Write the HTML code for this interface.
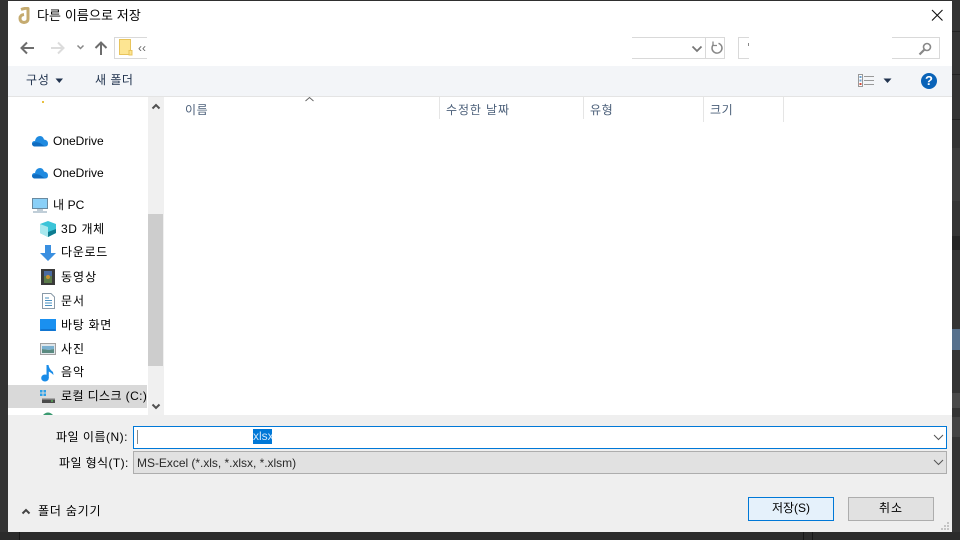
<!DOCTYPE html>
<html lang="ko"><head><meta charset="utf-8"><title>다른 이름으로 저장</title>
<style>
*{box-sizing:border-box}
html,body{margin:0;padding:0;width:960px;height:540px;overflow:hidden;background:#2f2f2f}
body{position:relative;font-family:"Liberation Sans","Noto Sans CJK KR",sans-serif;font-size:12px;color:#000}
div,span,svg{position:absolute}
.t{white-space:nowrap;line-height:16px;height:16px}
.g{color:#4c607a}
.d{color:#22344f}
.line{background:#e5e5e5}
</style></head>
<body>
<div style="left:0;top:0;width:8px;height:540px;background:#333"></div>
<div style="left:952px;top:0;width:8px;height:540px;background:#343434"></div>
<div style="left:952px;top:31px;width:8px;height:1px;background:#222"></div>
<div style="left:952px;top:74px;width:8px;height:1px;background:#222"></div>
<div style="left:952px;top:119px;width:8px;height:1px;background:#222"></div>
<div style="left:952px;top:148px;width:8px;height:53px;background:#3c3c3c"></div>
<div style="left:952px;top:236px;width:8px;height:14px;background:#252525"></div>
<div style="left:952px;top:329px;width:8px;height:21px;background:#56708c"></div>
<div style="left:952px;top:393px;width:8px;height:15px;background:#4a4a4a"></div>
<div style="left:952px;top:417px;width:8px;height:20px;background:#444"></div>
<div style="left:0;top:532px;width:960px;height:8px;background:#2b2b2b"></div>
<div style="left:19px;top:532px;width:1px;height:8px;background:#161616"></div>
<div style="left:803px;top:532px;width:1px;height:8px;background:#161616"></div>
<div style="left:812px;top:532px;width:1px;height:8px;background:#161616"></div>

<div style="left:8px;top:1px;width:944px;height:531px;background:#fff"></div>

<!-- title -->
<svg style="left:18px;top:7px" width="14" height="17" viewBox="0 0 14 17"><path d="M3 2.500Q9 .5 10 1.500V12Q10 15 6 15.500Q2 15 2 11.500Q2 8 6 7.500" fill="none" stroke="#c5ab70" stroke-width="3"/></svg>
<div class="t" style="left:37px;top:8px;font-size:13px;letter-spacing:.1px">다른 이름으로 저장</div>
<svg style="left:930px;top:8px" width="14" height="14" viewBox="0 0 14 14"><path d="M2 2L12.500 12.500M12.500 2L2 12.500" stroke="#111" stroke-width="1.100" fill="none"/></svg>

<!-- nav -->
<svg style="left:20px;top:41px" width="15" height="14" viewBox="0 0 15 14"><path d="M14 7H2M7 1.500L1.500 7L7 12.500" fill="none" stroke="#6d6d6d" stroke-width="2"/></svg>
<svg style="left:50px;top:41px" width="15" height="14" viewBox="0 0 15 14"><path d="M1 7H13M8 1.500L13.500 7L8 12.500" fill="none" stroke="#dcdcdc" stroke-width="2"/></svg>
<svg style="left:76px;top:44px" width="9" height="7" viewBox="0 0 9 7"><path d="M1.500 1.500L4.500 4.500L7.500 1.500" fill="none" stroke="#888" stroke-width="1.500"/></svg>
<svg style="left:94px;top:41px" width="14" height="14" viewBox="0 0 14 14"><path d="M7 14V2M1.500 7L7 1.500L12.500 7" fill="none" stroke="#6d6d6d" stroke-width="2"/></svg>

<!-- address -->
<div style="left:114px;top:37px;width:611px;height:22px;border:1px solid #d9d9d9;background:#fff"></div>
<div style="left:705px;top:37px;width:1px;height:22px;background:#d9d9d9"></div>
<svg style="left:119px;top:39px" width="14" height="17" viewBox="0 0 14 17"><path d="M.5.500H11.500V15.500H.5Z" fill="#fde592" stroke="#e8c45c"/><path d="M10 11.500H13V16H10Z" fill="#fde592" stroke="#e8c45c"/></svg>
<div class="t" style="left:138px;top:40px;font-size:12px;color:#666">‹‹</div>
<div style="left:147px;top:36px;width:485px;height:24px;background:#fff"></div>
<svg style="left:691px;top:45px" width="12" height="8" viewBox="0 0 12 8"><path d="M1.500 1.500L6 6L10.500 1.500" fill="none" stroke="#777" stroke-width="1.800"/></svg>
<svg style="left:710px;top:41px" width="14" height="14" viewBox="0 0 14 14"><path d="M3.500 3.500A5 5 0 1 0 8.500 2.300" fill="none" stroke="#888" stroke-width="1.500"/><path d="M3 .5V4.500H7" fill="none" stroke="#888" stroke-width="1.300"/></svg>

<!-- search -->
<div style="left:738px;top:37px;width:202px;height:22px;border:1px solid #d9d9d9;background:#fff"></div>
<div style="left:749px;top:36px;width:143px;height:24px;background:#fff"></div>
<div style="left:748px;top:43px;width:1px;height:3px;background:#888"></div>
<svg style="left:918px;top:42px" width="14" height="14" viewBox="0 0 14 14"><circle cx="9" cy="5" r="3.500" fill="none" stroke="#888" stroke-width="1.600"/><path d="M6.500 7.500L1.500 12.500" stroke="#888" stroke-width="2.200"/></svg>

<!-- toolbar -->
<div style="left:8px;top:66px;width:944px;height:31px;background:#f3f5f8;border-bottom:1px solid #e4e4e4"></div>
<div class="t d" style="left:26px;top:72px;letter-spacing:.8px">구성</div>
<svg style="left:55px;top:78px" width="9" height="6" viewBox="0 0 9 6"><path d="M.5.500H8L4.300 5Z" fill="#22344f"/></svg>
<div class="t d" style="left:95px;top:72px;letter-spacing:.5px">새 폴더</div>
<svg style="left:858px;top:74px" width="17" height="13" viewBox="0 0 17 13"><rect x=".5" y=".5" width="4" height="12" fill="#fff" stroke="#999"/><rect x="1.500" y="2" width="2" height="2" fill="#6a9fd0"/><rect x="1.500" y="5.500" width="2" height="2" fill="#6a9fd0"/><rect x="1.500" y="9" width="2" height="2" fill="#d04a3a"/><path d="M6 2.500H16M6 6.500H16M6 10.500H16" stroke="#999"/></svg>
<svg style="left:883px;top:78px" width="9" height="6" viewBox="0 0 9 6"><path d="M.5.500H8.500L4.500 5Z" fill="#22344f"/></svg>
<div style="left:921px;top:73px;width:16px;height:16px;border-radius:50%;background:#0a63b8;color:#fff;font-weight:bold;font-size:13px;line-height:16px;text-align:center">?</div>

<!-- sidebar -->
<div style="left:148px;top:97px;width:16px;height:318px;background:#f0f0f0"></div>
<div style="left:148px;top:214px;width:15px;height:152px;background:#cdcdcd"></div>
<svg style="left:151px;top:103px" width="10" height="7" viewBox="0 0 10 7"><path d="M1.500 5.500L5 2L8.500 5.500" fill="none" stroke="#505050" stroke-width="2"/></svg>
<svg style="left:151px;top:403px" width="10" height="7" viewBox="0 0 10 7"><path d="M1.500 1.500L5 5L8.500 1.500" fill="none" stroke="#505050" stroke-width="2"/></svg>
<div style="left:42px;top:101px;width:2px;height:2px;background:#e8c040"></div>

<svg style="left:32px;top:135px" width="16" height="12" viewBox="0 0 16 12"><path d="M2.500 11.500Q0 11 0 8.500Q0 6 3 6Q4 1 8 1Q11 1 12 4.500Q16 5 16 8.500Q16 11.500 13 11.500Z" fill="#1f8ae0"/><path d="M2.500 11.500Q0 11 0 8.500Q3 6 8 8L13 11.500Z" fill="#0f6cc0"/></svg>
<div class="t" style="left:53px;top:133px">OneDrive</div>
<svg style="left:32px;top:167px" width="16" height="12" viewBox="0 0 16 12"><path d="M2.500 11.500Q0 11 0 8.500Q0 6 3 6Q4 1 8 1Q11 1 12 4.500Q16 5 16 8.500Q16 11.500 13 11.500Z" fill="#1f8ae0"/><path d="M2.500 11.500Q0 11 0 8.500Q3 6 8 8L13 11.500Z" fill="#0f6cc0"/></svg>
<div class="t" style="left:53px;top:165px">OneDrive</div>

<svg style="left:32px;top:198px" width="17" height="15" viewBox="0 0 17 15"><rect x=".5" y=".5" width="15" height="10" fill="#8ad0f8" stroke="#6a8aa0"/><path d="M5 12H11M1 14H15" stroke="#9ab0c0" stroke-width="1.200"/></svg>
<div class="t" style="left:53px;top:197px;letter-spacing:.1px">내 PC</div>

<svg style="left:40px;top:221px" width="16" height="16" viewBox="0 0 16 16"><path d="M8 0L16 3V12L8 16L0 12V3Z" fill="#3cc4d8"/><path d="M0 3L8 6V16L0 12Z" fill="#a8e8ee"/><path d="M8 11L16 8V12L8 16Z" fill="#0e7c90"/></svg>
<div class="t" style="left:61px;top:221px;letter-spacing:.6px">3D 개체</div>

<svg style="left:40px;top:245px" width="16" height="16" viewBox="0 0 16 16"><path d="M5 0H11V8H16L8 16L0 8H5Z" fill="#3a8fe0"/></svg>
<div class="t" style="left:61px;top:244px;letter-spacing:.7px">다운로드</div>

<svg style="left:41px;top:269px" width="14" height="16" viewBox="0 0 14 16"><rect width="14" height="16" fill="#3a3a3a"/><rect x="3" y="2" width="8" height="12" fill="#5a7a4a"/><rect x="3" y="2" width="8" height="5" fill="#4a6aa0"/><circle cx="7" cy="8" r="2" fill="#c89030"/></svg>
<div class="t" style="left:61px;top:269px;letter-spacing:1px">동영상</div>

<svg style="left:42px;top:293px" width="13" height="16" viewBox="0 0 13 16"><path d="M.5.500H9L12.500 4V15.500H.5Z" fill="#fff" stroke="#8a9aa8"/><path d="M3 5H7M3 7.500H10M3 10H10M3 12.500H10" stroke="#4a90c0"/></svg>
<div class="t" style="left:61px;top:293px;letter-spacing:1px">문서</div>

<svg style="left:40px;top:319px" width="16" height="12" viewBox="0 0 16 12"><rect width="16" height="12" fill="#1a90f0"/><rect x=".5" y="10.500" width="15" height="1" fill="#0a5ab0"/></svg>
<div class="t" style="left:61px;top:317px;letter-spacing:.7px">바탕 화면</div>

<svg style="left:40px;top:343px" width="16" height="12" viewBox="0 0 16 12"><rect x=".5" y=".5" width="15" height="11" fill="#dfe6ea" stroke="#a0a0a0"/><path d="M2 3H14V6L9 7L2 6Z" fill="#7ab0d0"/><path d="M2 6L9 7L14 6V10H2Z" fill="#5a8a80"/></svg>
<div class="t" style="left:61px;top:341px;letter-spacing:1px">사진</div>

<svg style="left:41px;top:364px" width="14" height="18" viewBox="0 0 14 18"><ellipse cx="4" cy="14" rx="3.800" ry="3.500" fill="#1a8ce8"/><path d="M5.500 14V1H7.500Q8 5 12 8L12.500 11Q10 8.500 7.800 7.500V14Z" fill="#1a8ce8"/></svg>
<div class="t" style="left:61px;top:364px;letter-spacing:1px">음악</div>

<div style="left:8px;top:385px;width:139px;height:23px;background:#d9d9d9"></div>
<svg style="left:40px;top:390px" width="16" height="14" viewBox="0 0 16 14"><rect x="0" y="0" width="2.500" height="2.500" fill="#2aa0e8"/><rect x="3.500" y="0" width="2.500" height="2.500" fill="#2aa0e8"/><rect x="0" y="3.500" width="2.500" height="2.500" fill="#2aa0e8"/><rect x="3.500" y="3.500" width="2.500" height="2.500" fill="#2aa0e8"/><rect x="2" y="9" width="13" height="4" fill="#4a4a4a"/><rect x="2" y="8" width="13" height="1.500" fill="#a8a8a8"/><rect x="11" y="10.500" width="2" height="1" fill="#60e060"/></svg>
<div class="t" style="left:61px;top:388px;width:86px;overflow:hidden;letter-spacing:.4px">로컬 디스크 (C:)</div>
<svg style="left:41px;top:412px" width="14" height="3" viewBox="0 0 14 3"><path d="M2 3Q7 -2 12 3Z" fill="#3a9a70"/></svg>

<!-- columns -->
<svg style="left:304px;top:96px" width="11" height="6" viewBox="0 0 11 6"><path d="M1.500 5L5.500 1.500L9.500 5" fill="none" stroke="#666" stroke-width="1"/></svg>
<div class="t g" style="left:185px;top:102px;letter-spacing:.6px">이름</div>
<div class="line" style="left:439px;top:97px;width:1px;height:22px"></div>
<div class="t g" style="left:446px;top:102px;letter-spacing:.9px">수정한 날짜</div>
<div class="line" style="left:583px;top:97px;width:1px;height:22px"></div>
<div class="t g" style="left:590px;top:102px;letter-spacing:.6px">유형</div>
<div class="line" style="left:703px;top:97px;width:1px;height:25px"></div>
<div class="t g" style="left:710px;top:102px;letter-spacing:.6px">크기</div>
<div class="line" style="left:783px;top:97px;width:1px;height:25px"></div>

<!-- bottom -->
<div style="left:8px;top:415px;width:944px;height:117px;background:#efefef"></div>
<div class="t" style="left:56px;top:429px;letter-spacing:.5px">파일 이름(N):</div>
<div style="left:133px;top:426px;width:814px;height:23px;background:#fff;border:1px solid #0078d7"></div>
<div style="left:137px;top:430px;width:1px;height:14px;background:#888"></div>
<div class="t" style="left:253px;top:429px;width:19px;height:15px;line-height:15px;background:#0078d7;color:#cfe6fa;overflow:hidden">xlsx</div>
<svg style="left:933px;top:434px" width="11" height="7" viewBox="0 0 11 7"><path d="M1 1L5.500 5.500L10 1" fill="none" stroke="#555"/></svg>

<div class="t" style="left:59px;top:455px;letter-spacing:.4px">파일 형식(T):</div>
<div style="left:133px;top:451px;width:814px;height:23px;background:#e1e1e1;border:1px solid #adadad"></div>
<div class="t" style="left:137px;top:455px;color:#2a2a2a;letter-spacing:-.03px">MS-Excel (*.xls, *.xlsx, *.xlsm)</div>
<svg style="left:933px;top:459px" width="11" height="7" viewBox="0 0 11 7"><path d="M1 1L5.500 5.500L10 1" fill="none" stroke="#555"/></svg>

<svg style="left:21px;top:508px" width="10" height="7" viewBox="0 0 10 7"><path d="M1.500 5.500L5 2L8.500 5.500" fill="none" stroke="#444" stroke-width="2"/></svg>
<div class="t" style="left:38px;top:503px;letter-spacing:.8px">폴더 숨기기</div>

<div style="left:748px;top:497px;width:86px;height:24px;background:#e5f1fb;border:1px solid #0078d7;text-align:center;line-height:21px">저장(S)</div>
<div style="left:848px;top:497px;width:86px;height:24px;background:#e1e1e1;border:1px solid #adadad;text-align:center;line-height:21px;letter-spacing:1px">취소</div>

<svg style="left:940px;top:521px" width="10" height="10" viewBox="0 0 10 10"><path d="M7 1h2v2h-2zM4 4h2v2h-2zM7 4h2v2h-2zM1 7h2v2h-2zM4 7h2v2h-2zM7 7h2v2h-2z" fill="#c4c4c4"/></svg>
</body></html>
